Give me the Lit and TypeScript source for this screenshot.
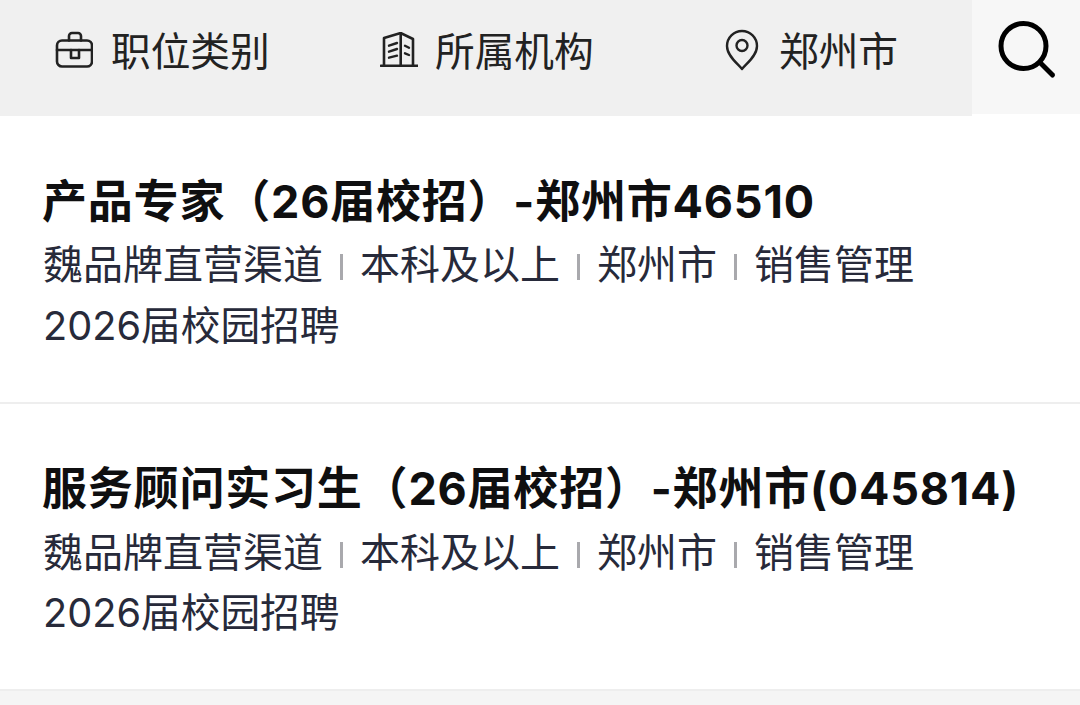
import { LitElement, html, css } from 'lit';
import { customElement } from 'lit/decorators.js';

interface Job {
  title: string;
  tags: string[];
  batch: string;
}

const JOBS: Job[] = [
  {
    title: '产品专家（26届校招）-郑州市46510',
    tags: ['魏品牌直营渠道', '本科及以上', '郑州市', '销售管理'],
    batch: '2026届校园招聘',
  },
  {
    title: '服务顾问实习生（26届校招）-郑州市(045814)',
    tags: ['魏品牌直营渠道', '本科及以上', '郑州市', '销售管理'],
    batch: '2026届校园招聘',
  },
];

@customElement('app-root')
export class AppRoot extends LitElement {
  static styles = css`
    :host {
      display: block;
      width: 1080px;
      height: 705px;
      overflow: hidden;
      background: #f5f5f5;
      font-family: 'Inter', 'Liberation Sans', 'Noto Sans CJK SC', sans-serif;
    }

    /* top filter bar */
    .top {
      display: flex;
      height: 116px;
      background: #fff;
    }
    .filters {
      width: 972px;
      height: 116px;
      background: #f0f0f0;
      display: grid;
      grid-template-columns: 325px 344px 303px;
      color: #222;
    }
    .filter {
      display: flex;
      align-items: center;
      padding: 0 0 11px 55px;
      font-size: 39.7px;
      line-height: 1;
    }
    .filter svg {
      flex: none;
      fill: none;
      stroke: currentColor;
      margin-bottom: 5px;
    }
    .f-job svg { width: 38px; height: 38px; margin-right: 18px; }
    .f-org svg { width: 38px; height: 36px; margin-right: 17px; }
    .f-city { padding-left: 56px; }
    .f-city svg { width: 34px; height: 42px; margin-right: 20px; }
    .search {
      width: 108px;
      height: 114px;
      background: #f7f7f7;
      display: flex;
      justify-content: center;
      padding-top: 20px;
      box-sizing: border-box;
    }
    .search svg { width: 60px; height: 60px; margin-left: 2px; }

    /* job cards */
    .job {
      height: 287px;
      box-sizing: border-box;
      background: #fff;
      padding: 57px 43px 0;
      border-bottom: 2px solid #eeeeee;
    }
    .job.first { height: 288px; padding-top: 58px; }
    .title {
      margin-left: -1px;
      font-size: 45px;
      line-height: 56px;
      font-weight: 700;
      letter-spacing: 0.8px;
      color: #0f0f10;
      white-space: nowrap;
    }
    .tags {
      display: flex;
      align-items: center;
      margin-top: 8px;
      height: 56px;
      font-size: 40px;
      line-height: 56px;
      color: #272a3a;
      white-space: nowrap;
    }
    .job.first .tags { margin-top: 7px; }
    .sep {
      width: 3px;
      height: 26px;
      margin: 4px 17px 0;
      background: #a9a9ad;
    }
    .batch {
      margin-top: 4px;
      font-size: 39.7px;
      line-height: 56px;
      color: #272a3a;
      white-space: nowrap;
    }
    .job.first .batch { margin-top: 5px; }
  `;

  renderJob(job: Job, index: number) {
    return html`
      <div class="job ${index === 0 ? 'first' : ''}">
        <div class="title">${job.title}</div>
        <div class="tags">
          ${job.tags.map(
            (tag, i) => html`${i > 0 ? html`<i class="sep"></i>` : ''}<span>${tag}</span>`
          )}
        </div>
        <div class="batch">${job.batch}</div>
      </div>
    `;
  }

  render() {
    return html`
      <div class="top">
        <div class="filters">
          <div class="filter f-job">
            <svg viewBox="0 0 38 38" stroke-width="2.6" stroke-linejoin="round" stroke-linecap="round">
              <rect x="2" y="9.5" width="35" height="26" rx="5" />
              <path d="M14 9.5V5a3 3 0 0 1 3-3h6a3 3 0 0 1 3 3v4.5" />
              <path d="M2 19h35" />
              <path d="M16 19v8h8v-8" />
            </svg>
            <span>职位类别</span>
          </div>
          <div class="filter f-org">
            <svg viewBox="0 0 38 36" stroke-width="2.6" stroke-linejoin="round" stroke-linecap="round">
              <path d="M1 33.7h36.500" />
              <path d="M4 33.700V6L20.700 1 33 7v26.700" />
              <path d="M20.700 1v32.700" />
              <path d="M9 13.700l8-2.700M9 19.700l8-2.700M9 25.700l8-2M25 13.700l4 2M25 21.300l4 1.700" stroke-width="2.400" />
            </svg>
            <span>所属机构</span>
          </div>
          <div class="filter f-city">
            <svg viewBox="0 0 34 42" stroke-width="2.4" stroke-linejoin="round">
              <path d="M17 40C13 35 2 27 2 17A15 15 0 0 1 32 17C32 27 21 35 17 40Z" />
              <circle cx="17" cy="16.500" r="5.500" />
            </svg>
            <span>郑州市</span>
          </div>
        </div>
        <div class="search">
          <svg viewBox="0 0 60 60" fill="none" stroke="#000" stroke-width="5" stroke-linecap="round">
            <circle cx="26.500" cy="26" r="22.500" />
            <path d="M43.500 43l12 12" />
          </svg>
        </div>
      </div>
      ${JOBS.map((job, i) => this.renderJob(job, i))}
    `;
  }
}
